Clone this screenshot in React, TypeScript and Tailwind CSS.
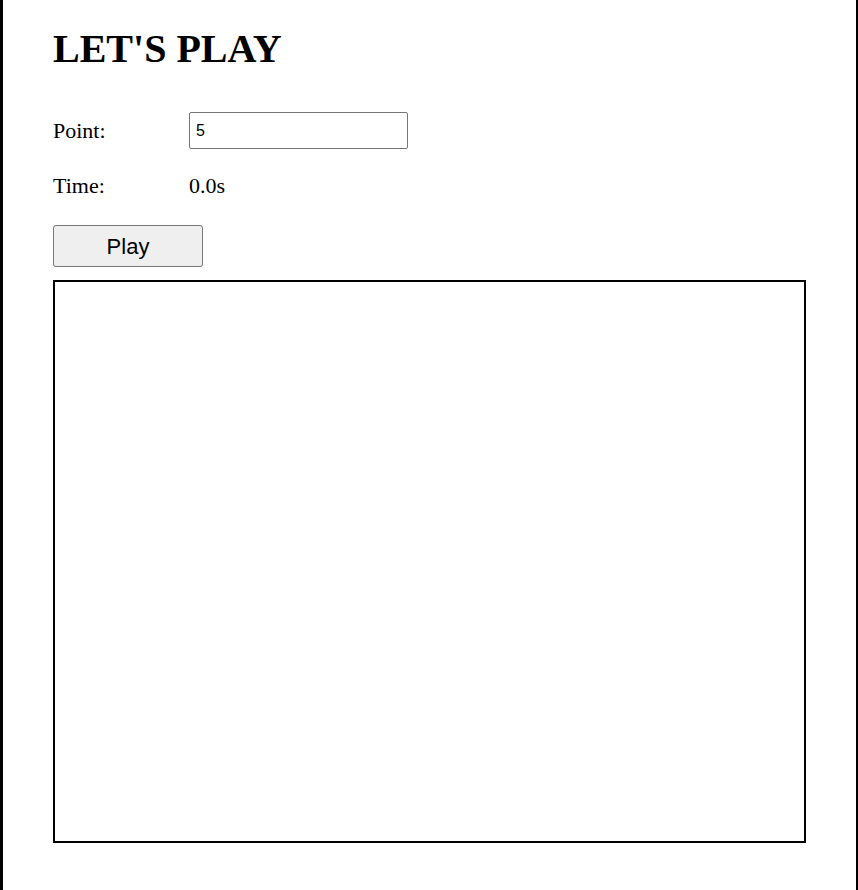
import React, { useState } from 'react';

const App = () => {
  const [points, setPoints] = useState('5');

  return (
    <div className="min-h-screen h-[890px] bg-white border-l-[3px] border-r-[2px] border-black font-['Liberation_Serif',serif] text-black">
      <div className="pl-[50px] pt-[27px] flex flex-col">
        <h1 className="h-[42px] leading-[43px] text-[40px] font-bold">LET'S PLAY</h1>

        <div className="mt-[43px] flex items-center h-[37px]">
          <label className="w-[136px] text-[22px] leading-[25px]">Point:</label>
          <input
            value={points}
            onChange={(e) => setPoints(e.target.value)}
            className="w-[219px] h-[37px] border border-[#767676] rounded-[2px] px-[6px] text-[16px] font-['Liberation_Sans',Arial,sans-serif] outline-none"
          />
        </div>

        <div className="mt-[24px] flex items-center h-[25px]">
          <span className="w-[136px] text-[22px] leading-[25px]">Time:</span>
          <span className="text-[22px] leading-[25px]">0.0s</span>
        </div>

        <button className="mt-[27px] w-[150px] h-[42px] bg-[#efefef] border border-[#767676] rounded-[3px] text-[22px] font-['Liberation_Sans',Arial,sans-serif]">
          Play
        </button>

        {/* game board */}
        <div className="mt-[13px] w-[753px] h-[563px] border-2 border-black relative"></div>
      </div>
    </div>
  );
};

export default App;
